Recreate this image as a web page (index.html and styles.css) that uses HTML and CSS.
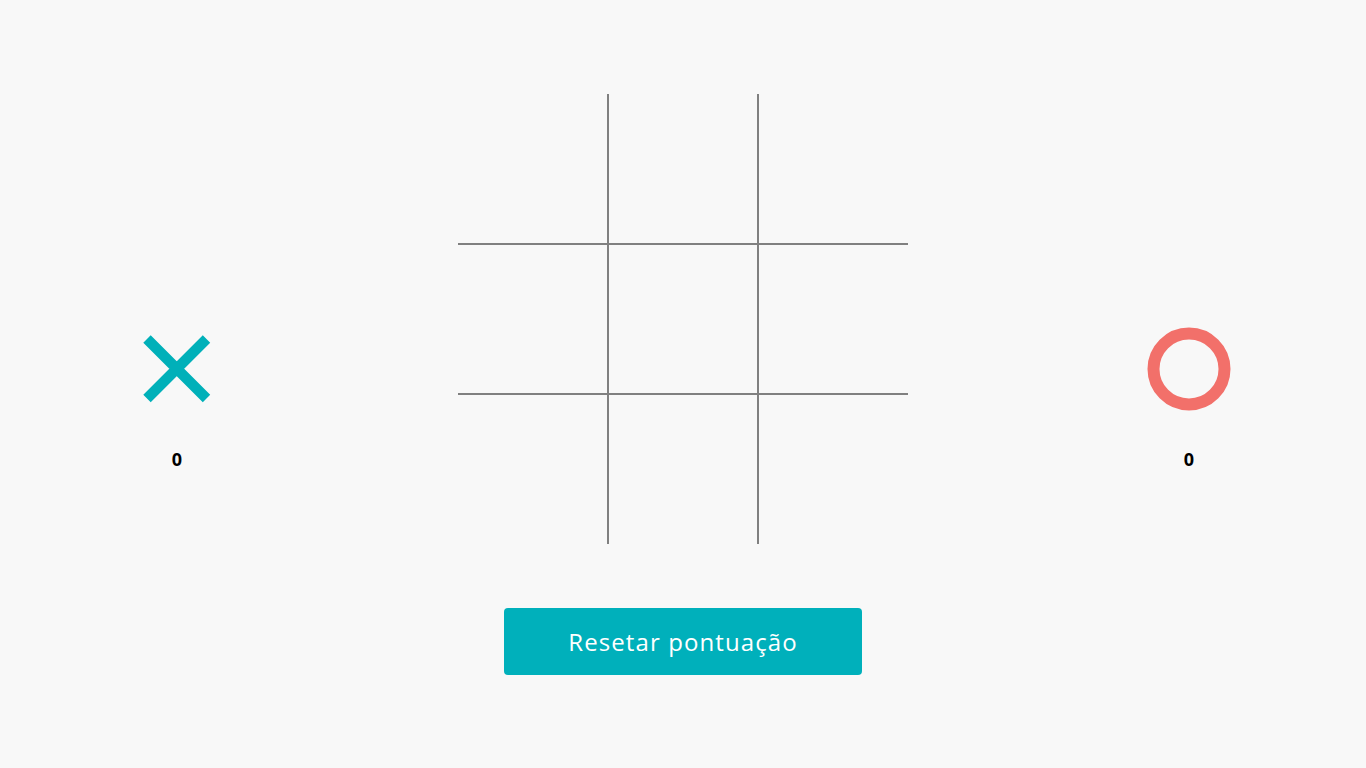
FILE: index.html
```html
<!DOCTYPE html>
<html lang="pt-BR">
<head>
<meta charset="utf-8">
<title>Jogo da Velha</title>
<link rel="stylesheet" href="styles.css">
</head>
<body>
<main class="app">
  <div class="game">
    <section class="player">
      <div class="player-icon">
        <svg width="84" height="84" viewBox="0 0 84 84">
          <path d="M12 12 L71.5 71.5 M71.5 12 L12 71.5" stroke="#00b0b9" stroke-width="10.5" stroke-linecap="butt" fill="none"/>
        </svg>
      </div>
      <div class="score">0</div>
    </section>
    <div class="board">
      <div class="cell"></div><div class="cell"></div><div class="cell"></div>
      <div class="cell"></div><div class="cell"></div><div class="cell"></div>
      <div class="cell"></div><div class="cell"></div><div class="cell"></div>
    </div>
    <section class="player">
      <div class="player-icon">
        <svg width="84" height="84" viewBox="0 0 84 84">
          <circle cx="42" cy="42" r="35.5" stroke="#f2706a" stroke-width="12" fill="none"/>
        </svg>
      </div>
      <div class="score">0</div>
    </section>
  </div>
  <button class="reset">Resetar pontuação</button>
</main>
</body>
</html>
```
FILE: styles.css
```css
* { box-sizing: border-box; }
html, body { margin: 0; padding: 0; }
body {
  background: #f8f8f8;
  font-family: "Open Sans", "Liberation Sans", sans-serif;
  width: 1366px;
  height: 768px;
}
.app {
  display: flex;
  flex-direction: column;
  align-items: center;
  padding-top: 94px;
}
.game {
  display: flex;
  justify-content: center;
  gap: 181px;
}
.player {
  width: 200px;
  display: flex;
  flex-direction: column;
  align-items: center;
  padding-top: 233px;
}
.player-icon { width: 84px; height: 84px; }
.player-icon svg { display: block; }
.score {
  margin-top: 37px;
  font-weight: 700;
  font-size: 18px;
  line-height: 22px;
  color: #000;
}
.board {
  display: grid;
  grid-template-columns: repeat(3, 150px);
  grid-template-rows: repeat(3, 150px);
}
.cell {
  border-color: #808080;
  border-style: solid;
  border-width: 0;
}
.cell:nth-child(3n+1), .cell:nth-child(3n+2) { border-right-width: 1px; }
.cell:nth-child(3n+2), .cell:nth-child(3n) { border-left-width: 1px; }
.cell:nth-child(-n+6) { border-bottom-width: 1px; }
.cell:nth-child(n+4) { border-top-width: 1px; }
.reset {
  margin-top: 64px;
  width: 358px;
  height: 67px;
  border: none;
  border-radius: 4px;
  background: #00b0bb;
  color: #fff;
  font-family: "Open Sans", "Liberation Sans", sans-serif;
  font-size: 24px;
  letter-spacing: 1.1px;
  cursor: pointer;
}
```
